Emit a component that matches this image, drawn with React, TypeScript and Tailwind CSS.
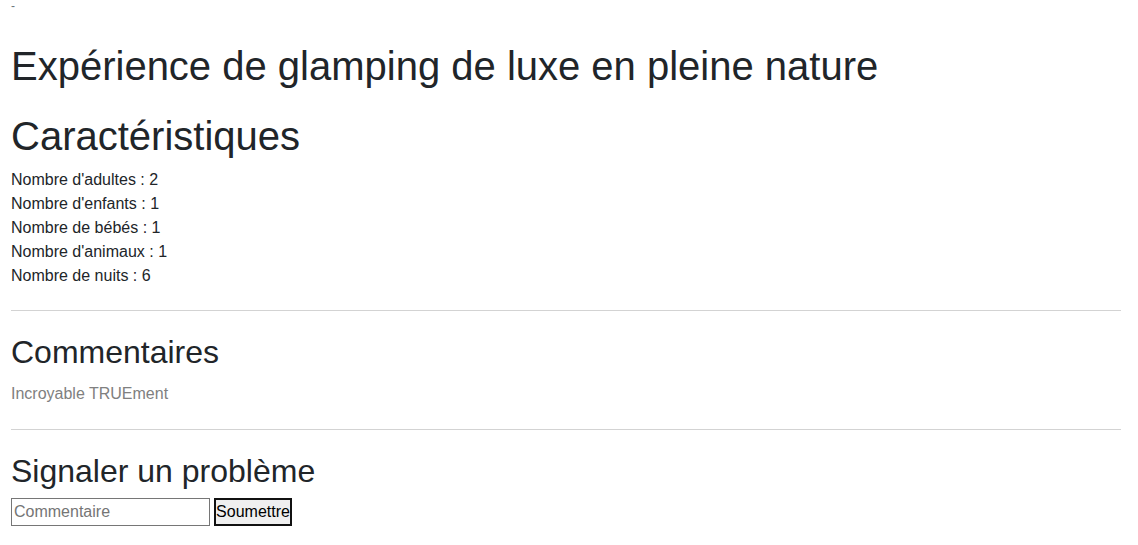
const FEATURES = [
  { label: "Nombre d'adultes", value: 2 },
  { label: "Nombre d'enfants", value: 1 },
  { label: "Nombre de bébés", value: 1 },
  { label: "Nombre d'animaux", value: 1 },
  { label: "Nombre de nuits", value: 6 },
];

export default function App() {
  return (
    <div className="min-h-screen bg-white pl-[11px] pr-[17px] font-['Liberation_Sans',Arial,sans-serif] text-[#212529]">
      <div className="text-[12px] leading-[12px] text-[#6c757d]">-</div>

      <h1 className="mt-[30px] mb-[22px] text-[40px] leading-[48px] font-normal">
        Expérience de glamping de luxe en pleine nature
      </h1>

      <h1 className="mb-[8px] text-[40px] leading-[48px] font-normal">
        Caractéristiques
      </h1>
      <div className="text-[16px] leading-[24px]">
        {FEATURES.map((f) => (
          <div key={f.label}>
            {f.label} : {f.value}
          </div>
        ))}
      </div>

      <hr className="mt-[22px] mb-[22px] border-0 border-t border-[#d3d3d3]" />

      <h2 className="mb-[11px] text-[32px] leading-[38px] font-normal">
        Commentaires
      </h2>
      <p className="text-[16px] leading-[24px] text-[#808080]">
        Incroyable TRUEment
      </p>

      <hr className="mt-[23px] mb-[22px] border-0 border-t border-[#d3d3d3]" />

      <h2 className="mb-[8px] text-[32px] leading-[38px] font-normal">
        Signaler un problème
      </h2>
      <form className="flex items-start gap-[4px]" onSubmit={(e) => e.preventDefault()}>
        <input
          type="text"
          placeholder="Commentaire"
          className="h-[28px] w-[199px] border border-[#767676] bg-white px-[2px] text-[16px] text-black placeholder:text-[#757575] outline-none"
        />
        <button
          type="submit"
          className="h-[28px] w-[78px] border-2 border-[#111] bg-[#efefef] p-0 text-[16px] leading-none text-black"
        >
          Soumettre
        </button>
      </form>
    </div>
  );
}
